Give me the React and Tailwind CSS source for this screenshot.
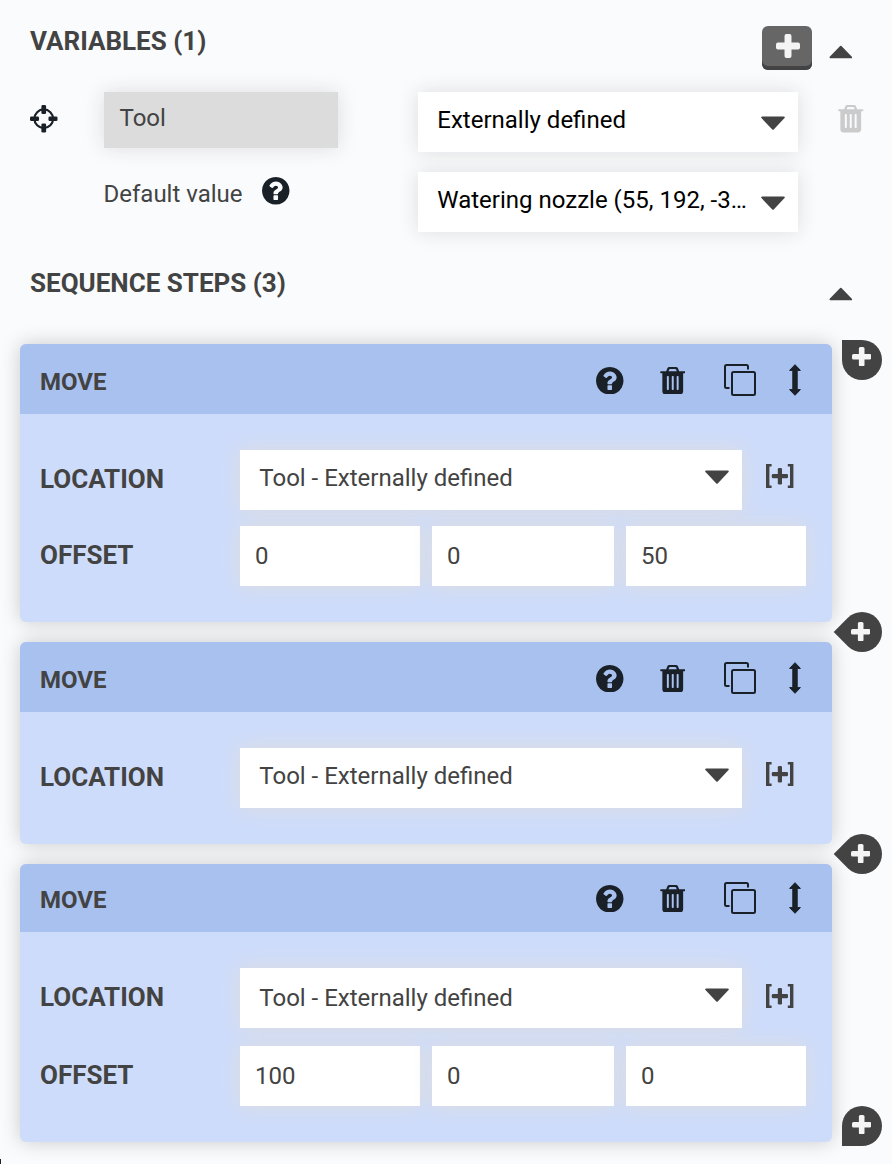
import React from "react";

function CrosshairsIcon() {
  return (
    <svg width="27.5" height="27.5" viewBox="0 0 28 28" className="block">
      <circle cx="14" cy="14" r="9.5" fill="none" stroke="#1a2027" strokeWidth="2.2" />
      <g fill="#1a2027">
        <rect x="11.6" y="0" width="4.8" height="9.2" rx="1.4" />
        <rect x="11.6" y="18.8" width="4.8" height="9.2" rx="1.4" />
        <rect x="0" y="11.6" width="9.2" height="4.8" rx="1.4" />
        <rect x="18.8" y="11.6" width="9.2" height="4.8" rx="1.4" />
      </g>
    </svg>
  );
}

function HelpIcon() {
  return (
    <svg width="27.5" height="27.5" viewBox="0 0 1536 1536" className="block">
      <path
        fill="#1a2027"
        fillRule="evenodd"
        d="M896 1248v-192q0-14-9-23t-23-9h-192q-14 0-23 9t-9 23v192q0 14 9 23t23 9h192q14 0 23-9t9-23zm256-672q0-88-55.5-163t-138.5-116-170-41q-243 0-371 213-15 24 8 42l132 100q7 6 19 6 16 0 25-12 53-68 86-92 34-24 86-24 48 0 85.5 26t37.5 59q0 38-20 61t-68 45q-63 28-115.5 86.5t-52.5 125.5v36q0 14 9 23t23 9h192q14 0 23-9t9-23q0-19 21.5-49.5t54.5-49.5q32-18 49-28.5t46-35 44.5-48 28-60.5 12.5-81zm384 192q0 209-103 385.5t-279.5 279.5-385.5 103-385.5-103-279.5-279.5-103-385.5 103-385.5 279.5-279.5 385.5-103 385.5 103 279.5 279.5 103 385.5z"
      />
    </svg>
  );
}

function TrashIcon({ color }) {
  return (
    <svg width="25.5" height="27.5" viewBox="0 0 26 28" className="block" fill={color}>
      <path
        fillRule="evenodd"
        d="M1 4.2H6.3L7.4 1.5Q8 0 9.6 0H16.2Q17.8 0 18.4 1.5L19.5 4.2H25Q25.8 4.2 25.8 5V5.6Q25.8 6.4 25 6.4H23.6V24.8Q23.6 28 20.4 28H5.6Q2.4 28 2.4 24.8V6.4H1Q.2 6.4 .2 5.6V5Q.2 4.2 1 4.2ZM8.7 4.2H17.1L16.4 2.6Q16.2 2 15.5 2H10.3Q9.6 2 9.4 2.6ZM7 10V22.6Q7 23.4 7.8 23.4H8.2Q9 23.4 9 22.6V10Q9 9.2 8.2 9.2H7.8Q7 9.2 7 10ZM12 10V22.6Q12 23.4 12.8 23.4H13.2Q14 23.4 14 22.6V10Q14 9.2 13.2 9.2H12.8Q12 9.2 12 10ZM17 10V22.6Q17 23.4 17.8 23.4H18.2Q19 23.4 19 22.6V10Q19 9.2 18.2 9.2H17.8Q17 9.2 17 10Z"
      />
    </svg>
  );
}

function CopyIcon() {
  return (
    <svg width="32" height="32" viewBox="0 0 32 32" className="block" fill="none" stroke="#1a2027" strokeWidth="2">
      <rect x="8" y="8" width="23" height="23" rx="1.5" />
      <path d="M24 5.5V2.5Q24 1 22.5 1H2.5Q1 1 1 2.5V22.5Q1 24 2.5 24H5.5" />
    </svg>
  );
}

function DragIcon() {
  return (
    <svg width="12" height="32" viewBox="0 0 12 32" className="block" fill="#1a2027" stroke="#1a2027" strokeWidth="1" strokeLinejoin="round">
      <path d="M6 .7L11.4 6.4H8.2V25.6H11.4L6 31.3L.6 25.6H3.8V6.4H.6Z" />
    </svg>
  );
}

function CaretDown() {
  return (
    <svg width="24" height="14" viewBox="0 0 24 14" className="block">
      <path d="M1.2 1.4H22.8L12 12.8Z" fill="#434343" stroke="#434343" strokeWidth="2" strokeLinejoin="round" />
    </svg>
  );
}

function CaretUp() {
  return (
    <svg width="24" height="14" viewBox="0 0 24 14" className="block">
      <path d="M1.4 12.4H22.2L11.8 1.6Z" fill="#434343" stroke="#434343" strokeWidth="1.8" strokeLinejoin="round" />
    </svg>
  );
}

function Plus({ size }) {
  return (
    <svg width={size} height={size} viewBox="0 0 20 20" className="block" fill="#f4f4f4">
      <rect x="7.1" y="0" width="5.8" height="20" rx="1.6" />
      <rect x="0" y="7.1" width="20" height="5.8" rx="1.6" />
    </svg>
  );
}

function BracketPlus() {
  return (
    <svg width="28" height="24" viewBox="0 0 28 24" className="block" fill="#434343">
      <path d="M0 0H5.6V2.6H3.4V21.4H5.6V24H0Z" />
      <path d="M27.4 0H21.8V2.6H24V21.4H21.8V24H27.4Z" />
      <rect x="11.8" y="4" width="4.2" height="16.4" rx="1.2" />
      <rect x="5.8" y="10.1" width="16.2" height="4.2" rx="1.2" />
    </svg>
  );
}

function AddStep({ corner, className = "" }) {
  const shape = {
    top: "rounded-full rounded-tl-none",
    middle: "rounded-full rounded-tl-none -rotate-45",
    bottom: "rounded-full rounded-bl-none",
  }[corner];
  const inner = {
    top: "pb-[6.5px] pr-[0.5px]",
    middle: "rotate-45 pr-[2.5px] pb-[0.5px]",
    bottom: "pb-[3px] pr-[0.5px]",
  }[corner];
  return (
    <button className={`block size-10 shrink-0 bg-[#434343] ${shape} ${className}`}>
      <span className={`flex size-10 items-center justify-center ${inner}`}>
        <Plus size={19.4} />
      </span>
    </button>
  );
}

function Select({ children, className, textClass, caretClass }) {
  return (
    <div className={`flex h-[60px] justify-between bg-white pr-[13.5px] pl-[19.3px] text-[24px] leading-[28px] shadow-[0_0_20px_#ddd] ${className}`}>
      <span className={`truncate ${textClass}`}>{children}</span>
      <span className={`shrink-0 ${caretClass}`}>
        <CaretDown />
      </span>
    </div>
  );
}

function Step({ offset, last, className }) {
  return (
    <section className={`rounded-[6px] bg-[#cedcfb] shadow-[0_0_20px_rgba(0,0,0,0.2)] ${className}`}>
      <header className={`flex items-start rounded-t-[6px] bg-[#a9c1ef] pl-5 ${last ? "h-[68px] pt-[19px]" : "h-[70px] pt-[21px]"}`}>
        <h3 className="w-[556px] pt-px text-[24px] leading-[32px] font-bold">MOVE</h3>
        <div className="-mt-[0.6px] flex h-8 items-center">
          <HelpIcon />
          <span className="ml-9"><TrashIcon color="#1a2027" /></span>
          <span className="ml-[39px]"><CopyIcon /></span>
          <span className="ml-[32.7px]"><DragIcon /></span>
        </div>
      </header>
      <div className="pt-9 pl-5">
        <div className="flex h-[60px]">
          <h4 className="w-[200px] pt-[14px] text-[26px] leading-[30px] font-bold">LOCATION</h4>
          <Select className="w-[502px]" textClass={last ? "pt-4" : "pt-[14px]"} caretClass="pt-5">
            Tool - Externally defined
          </Select>
          <span className={`pl-6 ${last ? "pt-4" : "pt-[14px]"}`}><BracketPlus /></span>
        </div>
        {offset && (
          <div className={`flex h-[60px] ${last ? "mt-[18px]" : "mt-4"}`}>
            <h4 className="w-[200px] pt-[14px] text-[26px] leading-[30px] font-bold">OFFSET</h4>
            <div className="grid grid-cols-[180px_182px_180px] gap-3">
              {offset.map((value, i) => (
                <div key={i} className="bg-white pt-4 pl-[15px] text-[24px] leading-[28px] shadow-[0_0_20px_#ddd]">
                  {value}
                </div>
              ))}
            </div>
          </div>
        )}
      </div>
    </section>
  );
}

export default function App() {
  return (
    <main className="relative h-[1164px] w-[892px] overflow-hidden bg-[#fafbfd] font-['Roboto',sans-serif] text-[#434343]">
      <div className="flex h-[92px] pl-[30px]">
        <h2 className="w-[732px] pt-[26px] text-[26px] leading-[30px] font-bold">VARIABLES (1)</h2>
        <button className="mt-[26px] flex h-11 w-[50px] justify-center rounded-[6px] bg-[#666] pt-2 pl-[2px] shadow-[inset_0_-4px_0_#434343]">
          <Plus size={24} />
        </button>
        <span className="mt-[45px] ml-[17px]"><CaretUp /></span>
      </div>

      <div className="flex h-[60px] pl-[30px]">
        <span className="w-[74px] pt-[13px]"><CrosshairsIcon /></span>
        <div className="mr-20 h-14 w-[234px] bg-[#dcdcdc] pt-3 pl-[15.5px] text-[24px] leading-[28px] shadow-[0_0_20px_#ddd]">
          Tool
        </div>
        <Select className="w-[380px] text-black" textClass="pt-[14px]" caretClass="pt-[24.3px]">
          Externally defined
        </Select>
        <span className="pt-[13px] pl-[40px]"><TrashIcon color="#cbcbcb" /></span>
      </div>

      <div className="mt-5 flex h-[60px] pl-[103.5px]">
        <span className="w-[158.5px] pt-2 text-[24px] leading-[28px]">Default value</span>
        <span className="w-[156px] pt-[5px]"><HelpIcon /></span>
        <Select className="w-[380px] text-black" textClass="w-[316px] pt-[14px]" caretClass="pt-[24.3px]">
          Watering nozzle (55, 192, -300)
        </Select>
      </div>

      <div className="flex h-[108px] pl-[30px]">
        <h2 className="w-[799px] pt-[36px] text-[26px] leading-[30px] font-bold">SEQUENCE STEPS (3)</h2>
        <span className="mt-[55px]"><CaretUp /></span>
      </div>

      <div className="flex gap-[10px] pl-5">
        <div className="mt-1 flex w-[812px] flex-col gap-5">
          <Step className="h-[278px]" offset={["0", "0", "50"]} />
          <Step className="h-[202px]" />
          <Step className="h-[278px]" offset={["100", "0", "0"]} last />
        </div>
        <div className="flex flex-col">
          <AddStep corner="top" />
          <AddStep corner="middle" className="mt-[232px]" />
          <AddStep corner="middle" className="mt-[182px]" />
          <AddStep corner="bottom" className="mt-[232px]" />
        </div>
      </div>

      <div className="absolute bottom-0 left-0 h-[5px] w-px bg-[#222]" />
    </main>
  );
}
